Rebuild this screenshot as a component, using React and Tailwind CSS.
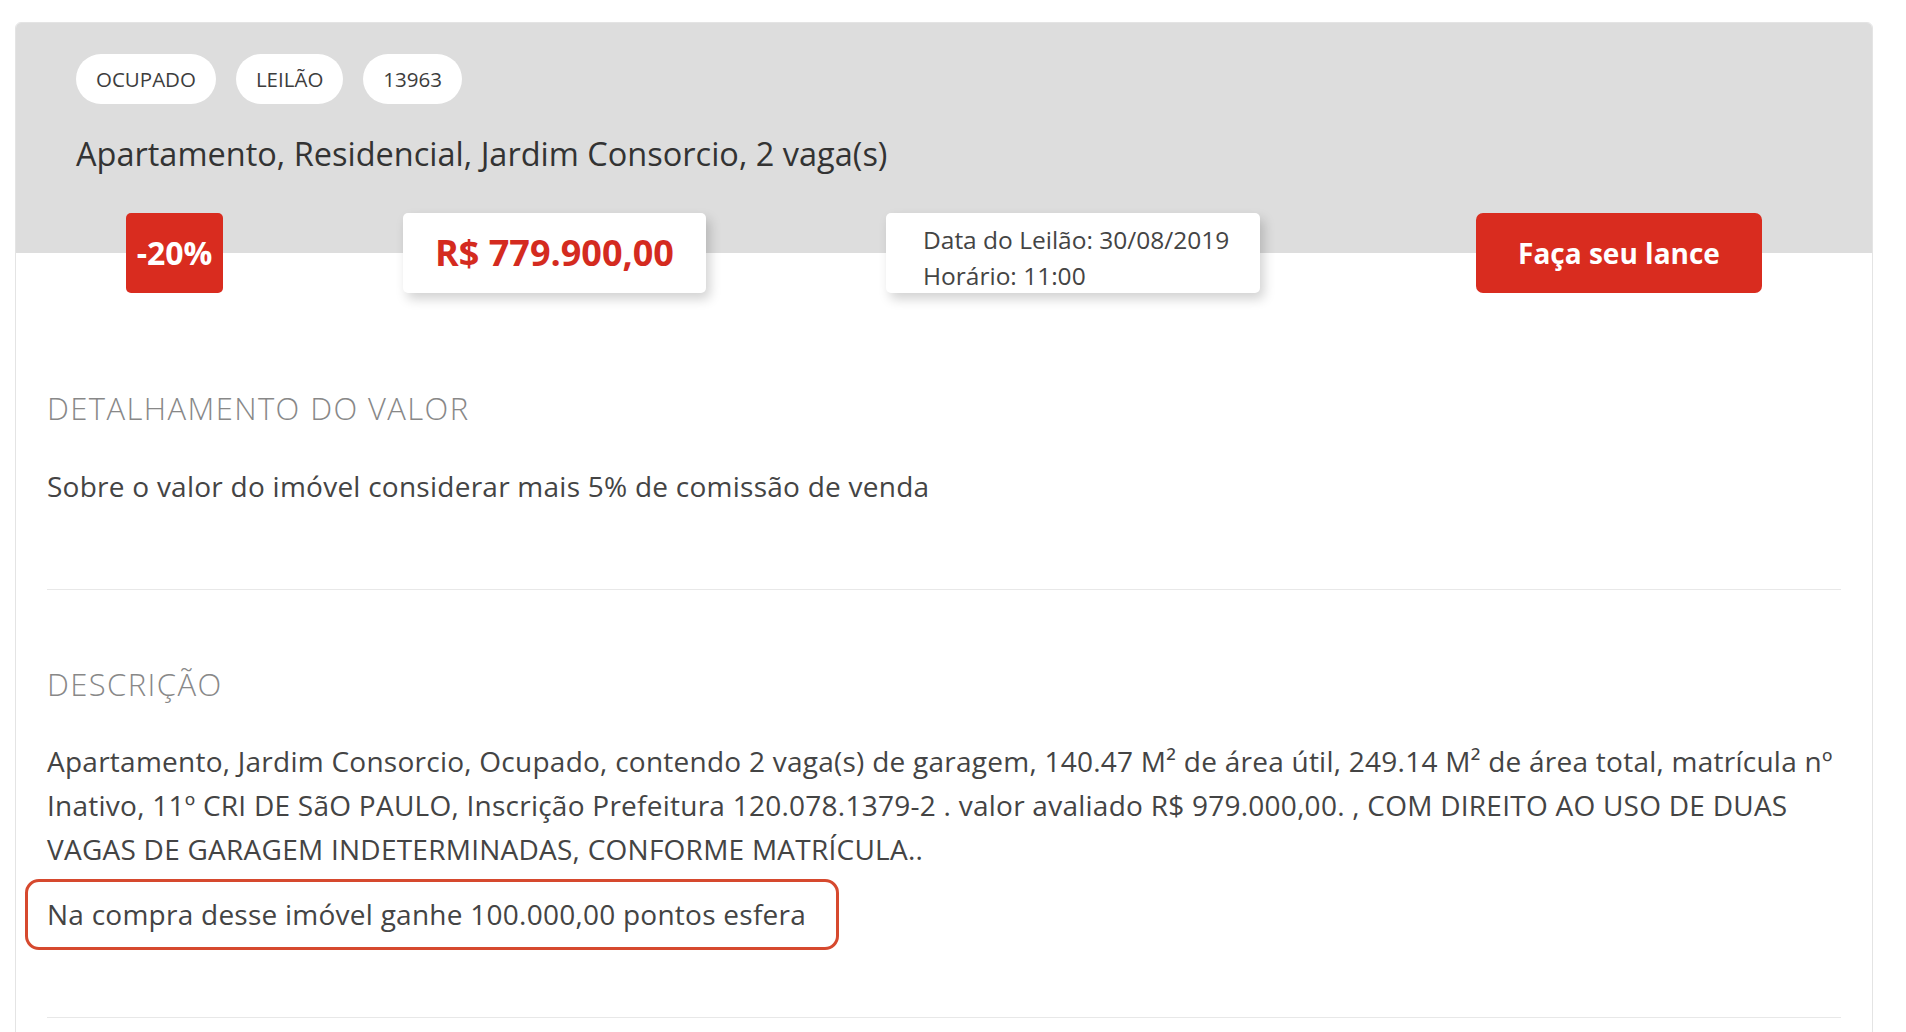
const tags = ["OCUPADO", "LEILÃO", "13963"];

function Tag({ label }) {
  return (
    <span className="flex h-[50px] items-center rounded-full bg-white px-[20px] text-[20.5px] text-[#3d3d3d]">
      {label}
    </span>
  );
}

export default function App() {
  return (
    <div className="min-h-screen bg-white pl-[15px] pr-[33px] pt-[22px] font-['Open_Sans',sans-serif]">
      <div className="overflow-hidden rounded-t-[6px] border border-[#e4e4e4]">
        {/* cabeçalho cinza */}
        <div className="bg-[#dddddd] pb-[77px] pl-[60px] pt-[31px]">
          <div className="flex gap-[20px]">
            {tags.map((t) => (
              <Tag key={t} label={t} />
            ))}
          </div>
          <h1 className="mt-[28px] text-[32.5px] leading-[44px] text-[#333333]">
            Apartamento, Residencial, Jardim Consorcio, 2 vaga(s)
          </h1>
        </div>

        <div className="relative -mt-[40px] flex items-start pl-[110px]">
          <div className="flex h-[80px] w-[97px] items-center justify-center rounded-[5px] bg-[#d92c1f] text-[32px] font-bold text-white">
            -20%
          </div>
          <div className="ml-[180px] flex h-[80px] w-[303px] items-center justify-center rounded-[5px] bg-white text-[36px] font-bold text-[#d42b1f] shadow-[4px_6px_12px_rgba(0,0,0,0.18)]">
            R$ 779.900,00
          </div>
          <div className="ml-[180px] h-[80px] w-[374px] rounded-[5px] bg-white pl-[37px] pt-[9px] text-[24.5px] leading-[36px] text-[#444444] shadow-[4px_6px_12px_rgba(0,0,0,0.18)]">
            <p>Data do Leilão: 30/08/2019</p>
            <p>Horário: 11:00</p>
          </div>
          <button className="ml-[216px] flex h-[80px] w-[286px] items-center justify-center rounded-[7px] bg-[#d92c1f] text-[28px] font-bold text-white">
            Faça seu lance
          </button>
        </div>

        <div className="px-[31px] pb-[40px]">
          <section className="border-b border-[#e8e8e8] pb-[81px] pt-[97px]">
            <h2 className="text-[31px] font-light leading-[36px] tracking-[1.4px] text-[#888888]">
              DETALHAMENTO DO VALOR
            </h2>
            <p className="mt-[38px] text-[28px] leading-[44px] tracking-[0.25px] text-[#444444]">
              Sobre o valor do imóvel considerar mais 5% de comissão de venda
            </p>
          </section>

          <section className="border-b border-[#e8e8e8] pb-[67px] pt-[76px]">
            <h2 className="text-[31px] font-light leading-[36px] tracking-[1.4px] text-[#888888]">
              DESCRIÇÃO
            </h2>
            <p className="mt-[37px] text-[28px] leading-[44px] tracking-[0.25px] text-[#444444]">
              Apartamento, Jardim Consorcio, Ocupado, contendo 2 vaga(s) de garagem, 140.47 M² de área útil, 249.14 M² de área total, matrícula nº Inativo, 11º CRI DE SãO PAULO, Inscrição Prefeitura 120.078.1379-2 . valor avaliado R$ 979.000,00. , COM DIREITO AO USO DE DUAS VAGAS DE GARAGEM INDETERMINADAS, CONFORME MATRÍCULA..
            </p>
            <div className="-ml-[22px] mt-[8px] inline-block rounded-[14px] border-[3px] border-[#d6492e] pb-[11px] pl-[19px] pr-[30px] pt-[10px] text-[28px] leading-[44px] tracking-[0.25px] text-[#444444]">
              Na compra desse imóvel ganhe 100.000,00 pontos esfera
            </div>
          </section>
        </div>
      </div>
    </div>
  );
}
